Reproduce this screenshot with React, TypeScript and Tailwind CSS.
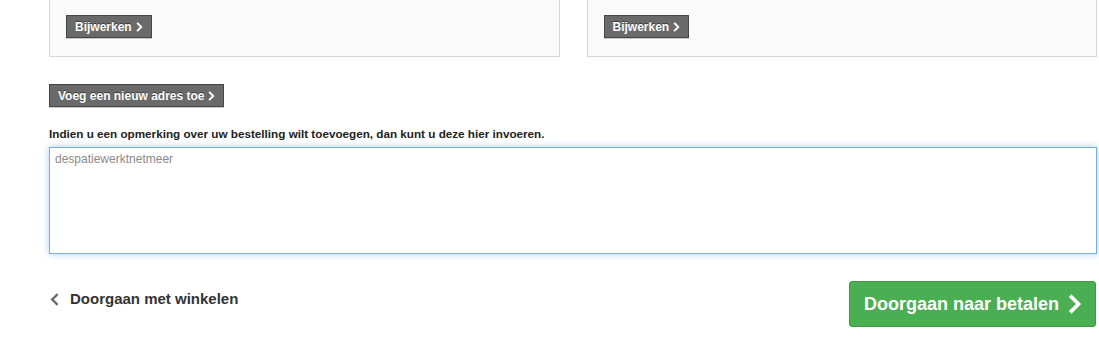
import React from "react";

function Chevron({ dir = "right", className }: { dir?: "left" | "right"; className?: string }) {
  const pts = dir === "right" ? "3,2 9,8 3,14" : "9,2 3,8 9,14";
  return (
    <svg viewBox="0 0 12 16" className={className} fill="none">
      <polyline points={pts} stroke="currentColor" strokeWidth="3.2" strokeLinecap="square" strokeLinejoin="miter" />
    </svg>
  );
}

function GrayButton({ label }: { label: string }) {
  return (
    <button className="flex items-center gap-[4px] h-[23px] pl-[8px] pr-[8px] bg-[#6a6a6a] border border-[#464646] text-white text-[12px] font-bold [text-shadow:0_-1px_0_rgba(0,0,0,0.45)] shadow-[0_1px_0_rgba(0,0,0,0.2)]">
      <span>{label}</span>
      <Chevron className="w-[7px] h-[10px]" />
    </button>
  );
}

function AddressCard() {
  return (
    <div className="flex-1 flex items-start h-[57px] bg-[#fafafa] border-x border-b border-[#d6d6d6] pl-[16px] pt-[15px]">
      <GrayButton label="Bijwerken" />
    </div>
  );
}

export default function App() {
  return (
    <div className="min-h-screen bg-white font-['Liberation_Sans',Arial,sans-serif] text-[#222]">
      <div className="w-[1048px] ml-[49px]">
        {/* Addresses */}
        <div className="flex gap-[27px]">
          <AddressCard />
          <AddressCard />
        </div>

        <div className="flex mt-[27px]">
          <GrayButton label="Voeg een nieuw adres toe" />
        </div>

        {/* Remark */}
        <p className="mt-[20px] text-[11.7px] font-bold leading-[14px]">
          Indien u een opmerking over uw bestelling wilt toevoegen, dan kunt u deze hier invoeren.
        </p>
        <textarea
          className="block mt-[6px] w-full h-[107px] resize-none border border-[#74aee6] shadow-[0_0_7px_rgba(116,174,230,0.6)] outline-none px-[5px] py-[3px] text-[12px] text-[#8a8a8a] leading-[16px]"
          defaultValue="despatiewerktnetmeer"
        />

        {/* Footer actions */}
        <div className="flex items-start justify-between mt-[27px]">
          <a className="flex items-center gap-[11px] mt-[7px] pl-[1px] text-[15px] font-bold text-[#333]">
            <Chevron dir="left" className="w-[9px] h-[13px] text-[#6b6b6b]" />
            <span>Doorgaan met winkelen</span>
          </a>
          <button className="flex items-center gap-[9px] h-[46px] pl-[14px] pr-[13px] mr-[1px] rounded-[3px] bg-[#4aaf53] border border-[#3c9a44] text-white text-[18px] font-bold">
            <span>Doorgaan naar betalen</span>
            <Chevron className="w-[14px] h-[20px]" />
          </button>
        </div>
      </div>
    </div>
  );
}
